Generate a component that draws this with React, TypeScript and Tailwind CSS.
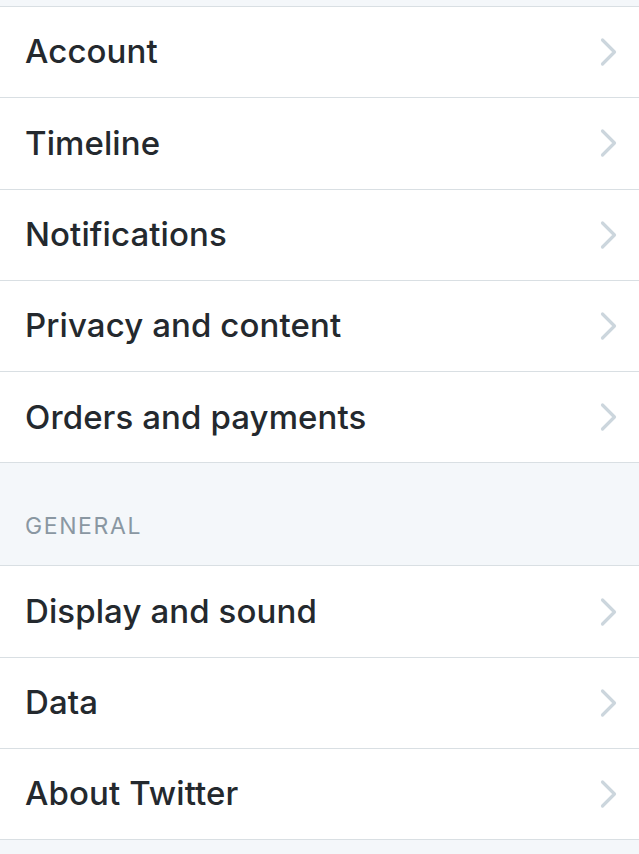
import React from 'react';

const accountItems = ['Account', 'Timeline', 'Notifications', 'Privacy and content', 'Orders and payments'];
const generalItems = ['Display and sound', 'Data', 'About Twitter'];

const Chevron = () => (
  <svg width="18" height="30" viewBox="0 0 18 30" fill="none" className="shrink-0">
    <path d="M3.5 3l12 12-12 12" stroke="#ccd6dd" strokeWidth="3.2" strokeLinecap="round" strokeLinejoin="round" />
  </svg>
);

const SettingsRow = ({ label }: { label: string }) => (
  <div className="flex h-[91.3px] items-center justify-between border-b border-[#d9dfe3] bg-white pl-[25px] pr-[22px]">
    <span className="text-[33px] font-medium tracking-[0.1px] text-[#24292e]">{label}</span>
    <Chevron />
  </div>
);

export default function App() {
  return (
    <div className="min-h-[854px] w-[639px] bg-[#f4f7fa] font-['Inter','Liberation_Sans',sans-serif]">
      <div className="h-[7px] border-b border-[#d9dfe3]" />
      {accountItems.map((item) => (
        <SettingsRow key={item} label={item} />
      ))}
      <div className="flex h-[103px] items-end border-b border-[#d9dfe3] px-[25px] pb-[22px]">
        <span className="text-[23px] font-normal tracking-[1.6px] text-[#8a97a2]">GENERAL</span>
      </div>
      {generalItems.map((item) => (
        <SettingsRow key={item} label={item} />
      ))}
    </div>
  );
}
